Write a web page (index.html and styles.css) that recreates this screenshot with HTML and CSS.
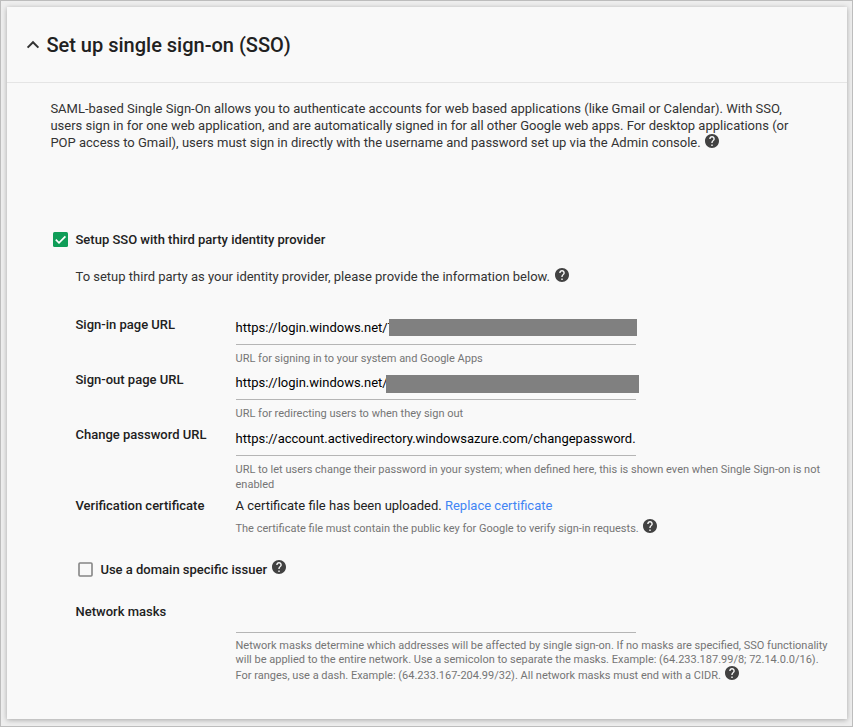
FILE: index.html
```
<!DOCTYPE html>
<html lang="en">
<head>
<meta charset="utf-8">
<title>Set up single sign-on (SSO)</title>
<link rel="stylesheet" href="styles.css">
</head>
<body>
<svg class="defs" width="0" height="0" aria-hidden="true">
  <symbol id="help" viewBox="2 2 20 20">
    <path d="M12 2C6.48 2 2 6.48 2 12s4.48 10 10 10 10-4.48 10-10S17.52 2 12 2zm1 17h-2v-2h2v2zm2.07-7.75l-.9.92C13.45 12.9 13 13.5 13 15h-2v-.5c0-1.1.45-2.1 1.17-2.83l1.24-1.26c.37-.36.59-.86.59-1.41 0-1.1-.9-2-2-2s-2 .9-2 2H8c0-2.21 1.79-4 4-4s4 1.79 4 4c0 .88-.36 1.68-.93 2.25z"/>
  </symbol>
</svg>
<main class="card">
  <header class="card-header">
    <svg class="chevron" viewBox="0 0 14 10"><path d="M1.6 7.6 7 2.2l5.4 5.4"/></svg>
    <h1>Set up single sign-on (SSO)</h1>
  </header>
  <p class="intro">SAML-based Single Sign-On allows you to authenticate accounts for web based applications (like Gmail or Calendar). With SSO,<br>users sign in for one web application, and are automatically signed in for all other Google web apps. For desktop applications (or<br>POP access to Gmail), users must sign in directly with the username and password set up via the Admin console. <svg class="help"><use href="#help"/></svg></p>
  <section class="provider">
    <div class="check-row">
      <svg class="checkbox" viewBox="0 0 15 15"><rect width="15" height="15" rx="1.5" fill="#0f9d58"/><path d="M2.8 7.7 6 10.9l6.4-6.5" fill="none" stroke="#fff" stroke-width="1.7"/></svg>
      <span class="strong">Setup SSO with third party identity provider</span>
    </div>
    <p class="instructions">To setup third party as your identity provider, please provide the information below. <svg class="help"><use href="#help"/></svg></p>
    <div class="row url-row">
      <span class="strong">Sign-in page URL</span>
      <div class="field">
        <div class="input"><span>https://login.windows.net/T</span><span class="redacted signin"></span></div>
        <p class="hint">URL for signing in to your system and Google Apps</p>
      </div>
    </div>
    <div class="row url-row">
      <span class="strong">Sign-out page URL</span>
      <div class="field">
        <div class="input"><span>https://login.windows.net/</span><span class="redacted signout"></span></div>
        <p class="hint">URL for redirecting users to when they sign out</p>
      </div>
    </div>
    <div class="row password-row">
      <span class="strong">Change password URL</span>
      <div class="field">
        <div class="input">https://account.activedirectory.windowsazure.com/changepassword.</div>
        <p class="hint">URL to let users change their password in your system; when defined here, this is shown even when Single Sign-on is not<br>enabled</p>
      </div>
    </div>
    <div class="row certificate-row">
      <span class="strong">Verification certificate</span>
      <div class="field">
        <p class="status">A certificate file has been uploaded. <a>Replace certificate</a></p>
        <p class="hint">The certificate file must contain the public key for Google to verify sign-in requests. <svg class="help"><use href="#help"/></svg></p>
      </div>
    </div>
    <div class="check-row issuer">
      <svg class="checkbox" viewBox="0 0 15 15"><rect x="1" y="1" width="13" height="13" rx="1" fill="none" stroke="#858585" stroke-width="1.6"/></svg>
      <span class="strong">Use a domain specific issuer</span>
      <svg class="help"><use href="#help"/></svg>
    </div>
    <div class="row masks-row">
      <span class="strong">Network masks</span>
      <div class="field">
        <div class="input"></div>
        <p class="hint">Network masks determine which addresses will be affected by single sign-on. If no masks are specified, SSO functionality<br>will be applied to the entire network. Use a semicolon to separate the masks. Example: (64.233.187.99/8; 72.14.0.0/16).<br>For ranges, use a dash. Example: (64.233.167-204.99/32). All network masks must end with a CIDR. <svg class="help"><use href="#help"/></svg></p>
      </div>
    </div>
  </section>
</main>
</body>
</html>
```
FILE: styles.css
```
* { box-sizing: border-box; }
body {
  margin: 0;
  height: 727px;
  padding: 6px;
  border: 1px solid #bdbdbd;
  background: #eee;
  font: 13px/17px Roboto, sans-serif;
  color: #333;
  overflow: hidden;
}
h1, p { margin: 0; font-weight: 400; }
.defs { position: absolute; }
.card {
  width: 840px;
  height: 712px;
  background: #f9f9f9;
  box-shadow: 0 1px 5px rgba(0, 0, 0, .3);
}
.card-header {
  display: flex;
  align-items: center;
  height: 76px;
  padding-left: 19px;
  border-bottom: 1px solid #e5e5e5;
}
.chevron { width: 14px; height: 10px; margin-right: 6.4px; }
.chevron path { fill: none; stroke: #333; stroke-width: 2; }
h1 { font-size: 20px; line-height: 24px; font-weight: 500; color: #212121; white-space: nowrap; }
.intro { height: 114px; padding: 17px 0 0 43.4px; white-space: nowrap; }
.help { width: 14px; height: 14px; margin-left: 2px; vertical-align: -1px; fill: #424242; }
.intro .help { margin-left: .6px; }
.provider { padding: 32px 0 0 45.5px; }
.check-row { display: flex; align-items: center; height: 20px; }
.checkbox { width: 15px; height: 15px; margin-right: 8px; }
.strong { font-weight: 500; color: #212121; white-space: nowrap; }
.instructions { height: 67px; padding: 19px 0 0 23px; }
.row { display: grid; grid-template-columns: 160px 1fr; margin-left: 23px; }
.url-row { height: 55px; }
.password-row { height: 71px; }
.certificate-row { height: 62px; }
.input {
  display: flex;
  width: 400px;
  height: 29px;
  padding-top: 3px;
  border-bottom: 1px solid #b5b5b5;
  color: #000;
  white-space: nowrap;
}
.password-row .input { height: 30px; padding-top: 4px; }
.hint { padding-top: 6px; font-size: 11px; line-height: 15px; color: #757575; white-space: nowrap; }
.redacted { position: relative; flex: none; background: #808080; }
.signin { width: 248px; height: 17px; margin-left: -6px; }
.signout { width: 253px; height: 18px; margin: 1px 0 0 -1.4px; }
.status { color: #212121; }
.status a { color: #4285f4; }
.certificate-row .hint { padding-top: 5px; }
.issuer { margin-left: 25px; }
.issuer .strong { margin-left: -.1px; }
.issuer .help { margin: -4px 0 0 4.6px; }
.masks-row { padding-top: 24px; }
.masks-row .input { height: 30px; }
.masks-row .hint { line-height: 14px; }
.masks-row .help { margin: -1px 0 0 1px; vertical-align: -1px; }
```
